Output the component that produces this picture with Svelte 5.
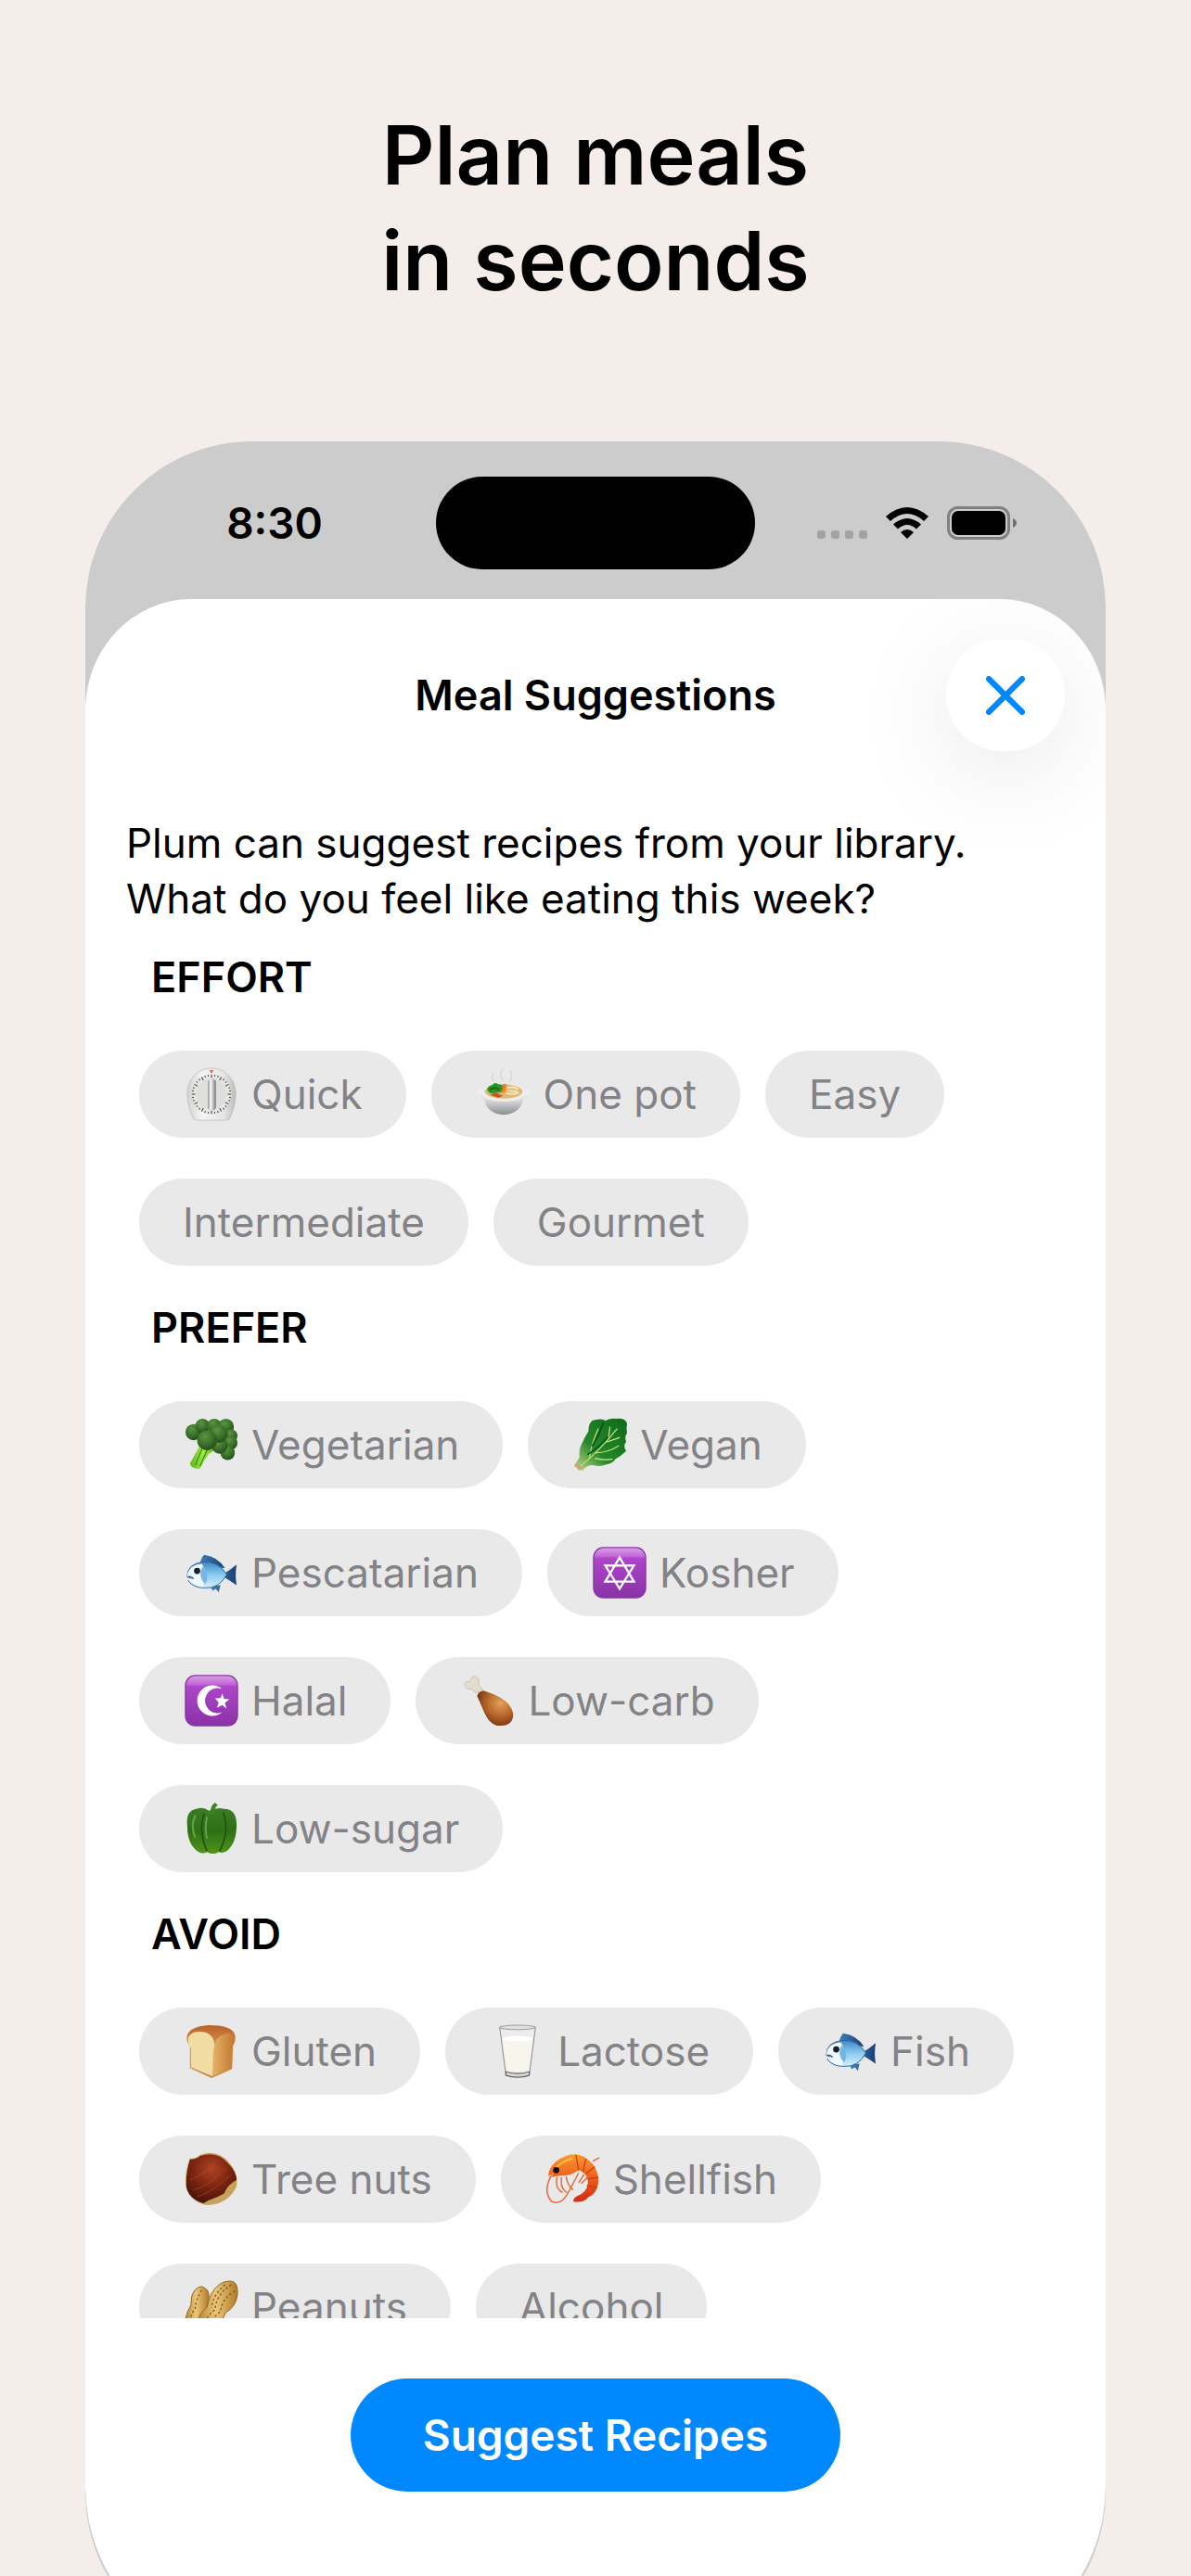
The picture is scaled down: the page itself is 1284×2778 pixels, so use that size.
<script>
  const groups = [
    { title: 'EFFORT', items: [['timer', 'Quick'], ['pot', 'One pot'], ['', 'Easy'], ['', 'Intermediate'], ['', 'Gourmet']] },
    { title: 'PREFER', items: [['broccoli', 'Vegetarian'], ['lettuce', 'Vegan'], ['fish', 'Pescatarian'], ['star', 'Kosher'], ['crescent', 'Halal'], ['drumstick', 'Low-carb'], ['pepper', 'Low-sugar']] },
    { title: 'AVOID', items: [['bread', 'Gluten'], ['milk', 'Lactose'], ['fish', 'Fish'], ['chestnut', 'Tree nuts'], ['shrimp', 'Shellfish'], ['peanuts', 'Peanuts'], ['', 'Alcohol']] },
  ];
  const ticks = Array.from({ length: 36 }, (_, i) => i * 10);
</script>

<svg class="defs" aria-hidden="true">
  <defs>
    <linearGradient id="steel" x1="0" x2="1"><stop offset="0" stop-color="#d2d2d0" /><stop offset=".3" stop-color="#f4f4f2" /><stop offset=".75" stop-color="#e6e6e4" /><stop offset="1" stop-color="#bcbcba" /></linearGradient>
    <linearGradient id="knob" x1="0" x2="1"><stop offset="0" stop-color="#8c8c8c" /><stop offset=".35" stop-color="#fff" /><stop offset=".6" stop-color="#c4c4c4" /><stop offset="1" stop-color="#777" /></linearGradient>
    <linearGradient id="bowl" x1="0" x2="0" y1="0" y2="1"><stop offset="0" stop-color="#fff" /><stop offset=".5" stop-color="#d5d7d8" /><stop offset="1" stop-color="#8b8e90" /></linearGradient>
    <radialGradient id="floret" cx=".4" cy=".3" r=".75"><stop offset="0" stop-color="#5c9443" /><stop offset=".6" stop-color="#376d28" /><stop offset="1" stop-color="#1f4a18" /></radialGradient>
    <linearGradient id="stalk" x1="0" x2="1"><stop offset="0" stop-color="#5cb81a" /><stop offset=".5" stop-color="#a4e84c" /><stop offset="1" stop-color="#4e9c18" /></linearGradient>
    <linearGradient id="leaf" x1="1" x2="0" y1="0" y2="1"><stop offset="0" stop-color="#0e6a1c" /><stop offset=".6" stop-color="#258729" /><stop offset="1" stop-color="#c8e08c" /></linearGradient>
    <linearGradient id="scales" x1="0" x2="0" y1="0" y2="1"><stop offset="0" stop-color="#3c86c4" /><stop offset=".5" stop-color="#8ccbf2" /><stop offset="1" stop-color="#d9effb" /></linearGradient>
    <linearGradient id="fin" x1="0" x2="1"><stop offset="0" stop-color="#3f7fb8" /><stop offset="1" stop-color="#1b3f73" /></linearGradient>
    <linearGradient id="violet" x1="0" x2="0" y1="0" y2="1"><stop offset="0" stop-color="#dca0e8" /><stop offset=".17" stop-color="#c268d8" /><stop offset=".22" stop-color="#ad45cb" /><stop offset="1" stop-color="#8a32a6" /></linearGradient>
    <radialGradient id="meat" cx=".65" cy=".35" r=".75"><stop offset="0" stop-color="#e2a05a" /><stop offset=".5" stop-color="#b8662a" /><stop offset="1" stop-color="#6a2a10" /></radialGradient>
    <linearGradient id="pepper" x1="0" x2="0" y1="0" y2="1"><stop offset="0" stop-color="#3b7d24" /><stop offset=".5" stop-color="#2f7016" /><stop offset="1" stop-color="#4f9418" /></linearGradient>
    <linearGradient id="crust" x1="0" x2="0" y1="0" y2="1"><stop offset="0" stop-color="#b9622a" /><stop offset=".3" stop-color="#cf8440" /><stop offset="1" stop-color="#c98a40" /></linearGradient>
    <linearGradient id="crustSide" x1="0" x2="1"><stop offset="0" stop-color="#e2b468" /><stop offset="1" stop-color="#c5772f" /></linearGradient>
    <radialGradient id="nut" cx=".5" cy=".3" r=".75"><stop offset="0" stop-color="#ae4220" /><stop offset=".5" stop-color="#7c2410" /><stop offset="1" stop-color="#3f100c" /></radialGradient>
    <linearGradient id="shell" x1="0" x2="0" y1="0" y2="1"><stop offset="0" stop-color="#fb9a2c" /><stop offset=".5" stop-color="#ef5c1c" /><stop offset="1" stop-color="#d02c14" /></linearGradient>
    <linearGradient id="peanut" x1="0" x2="1"><stop offset="0" stop-color="#b98432" /><stop offset=".45" stop-color="#ebc67a" /><stop offset="1" stop-color="#b07a26" /></linearGradient>
  </defs>
</svg>

{#snippet icon(name)}
  <svg class="emoji" viewBox="0 0 60 60" aria-hidden="true">
    {#if name === 'timer'}
      <path d="M30 1C15 1 3 13 3 29c0 11 3 20 6 27q1 3 4 3h34q3 0 4-3c3-7 6-16 6-27C57 13 45 1 30 1Z" fill="url(#steel)" stroke="#bbb" stroke-width=".8" />
      <circle cx="30" cy="30" r="22" fill="#e7e7e5" />
      {#each ticks as t}
        <line x1="30" x2="30" y1="8" y2={t % 30 ? 10 : 12} stroke="#444" stroke-width="1.1" transform="rotate({t} 30 30)" />
      {/each}
      <circle cx="30" cy="30" r="17" fill="#dededc" />
      <rect x="26" y="13" width="9" height="35" rx="4" fill="url(#knob)" />
      <path d="m30 7-2.5-4h5Z" fill="#d66" />
    {:else if name === 'pot'}
      <path d="M19 16q-4-5 0-10M29 14q-5-6 0-12M37 15q4-6 0-11" fill="none" stroke="#d6d6d6" stroke-width="1.4" />
      <path d="M1 27q0 6 7 8 3 17 22 18 19-1 22-18 7-2 7-8-4-5-29-5T1 27Z" fill="url(#bowl)" />
      <ellipse cx="30" cy="28" rx="26" ry="10" fill="#eceeee" />
      <ellipse cx="30" cy="27" rx="21" ry="8" fill="#dfb878" />
      <path d="M34 23q8-2 12 2M33 29q8 2 14-1M35 26l10 1" fill="none" stroke="#f6e6b6" stroke-width="2" />
      <path d="m26 20 7-2-1 9-6 2Z" fill="#ef7a25" /><path d="m15 31 6-3 8 4-5 2Z" fill="#c4571e" />
      <path d="M12 26q-1-5 5-6 3-4 7-1 5 0 5 4-1 6-8 5-6 3-9-2Z" fill="#299325" /><path d="M15 25q5-4 10 0" fill="none" stroke="#0d6518" stroke-width="1.500" />
    {:else if name === 'broccoli'}
      <path d="M17 31 6 51q1 6 11 6l10-17 10-6-6-6Z" fill="url(#stalk)" />
      <path d="m20 33-8 20M26 34l-9 20" stroke="#3e9410" stroke-width="1.400" />
      <g fill="url(#floret)"><circle cx="10" cy="16" r="9" /><circle cx="20" cy="9" r="8" /><circle cx="33" cy="9" r="8" /><circle cx="46" cy="10" r="9" /><circle cx="52" cy="20" r="7" /><circle cx="51" cy="28" r="8" /><circle cx="48" cy="39" r="8" /><circle cx="39" cy="31" r="9" /><circle cx="38" cy="18" r="10" /><circle cx="25" cy="25" r="11" /></g>
    {:else if name === 'lettuce'}
      <path d="M1 54q3-6 6-10-1-8 2-14 3-7 8-15 0-13 9-13 5-1 10 1 6-3 12-2 11-1 12 6-1 4 0 10-3 4-1 10-4 4 0 10-6 6-12 9-3 5-10 6-7 3-14 1-7-1-13 6Z" fill="url(#leaf)" />
      <path d="M8 54Q30 36 49 12M18 45q2-15 10-33M25 39q14 0 26-8M24 45q10 3 20 1M39 24l2-14M37 27l15-5" fill="none" stroke="#b6da7e" stroke-width="1.400" />
      <path d="M34 5q-5 14-13 27M39 21Q30 32 16 41" fill="none" stroke="#0b5318" stroke-width="1.800" />
      <path d="m1 53 3-3 6 6-3 3Z" fill="#c8a878" />
    {:else if name === 'fish'}
      <path d="M17 20q2-8 5-10 15 2 23 15Z" fill="url(#fin)" />
      <path d="m29 45 2 5 4-2 3 4 2-8ZM44 31q7-4 14-10-2 12 0 23-6-4-14-9Z" fill="url(#fin)" />
      <path d="M3 34q0-14 18-16 17-1 26 14-8 16-25 15-12 0-18-8l4-2Z" fill="url(#scales)" stroke="#2b659d" stroke-width="1" />
      <path d="M3 34q1-12 16-14 9 13 1 26-10-1-16-8l5-2Z" fill="#eef8fd" />
      <path d="M20 23q9 9 3 20-9-9-3-20" fill="#73b7e3" />
      <circle cx="14" cy="28" r="3.500" fill="#15202b" />
      <path d="M3 35q4-2 7 2" fill="none" stroke="#2b659d" stroke-width="1.500" />
    {:else if name === 'star' || name === 'crescent'}
      <rect x="1" y="2" width="58" height="56" rx="11" fill="url(#violet)" stroke="#8a38a2" stroke-width="1.400" />
      {#if name === 'star'}
        <path d="m30 13 16 27H14ZM30 48 14 22h32Z" fill="none" stroke="#fff" stroke-width="2.400" />
      {:else}
        <path d="M42 17a17 17 0 1 0 0 26 14 14 0 1 1 0-26Z" fill="#fff" />
        <path d="m42 22 2 6 6 .5-5 4 2 6.500-5-4-6 3 2-6-4-4.500 6-.3Z" fill="#fff" />
      {/if}
    {:else if name === 'drumstick'}
      <path d="m16 21-4-4q-7 1-8-4 0-5 6-4 1-7 6-6 6 2 3 9l7 8Z" fill="#e4dccf" stroke="#c3b7a6" stroke-width=".8" />
      <path d="M18 25q1-5 7-6c12 4 30 10 33 25 1 9-4 14-14 14-15 0-18-17-26-33Z" fill="url(#meat)" />
    {:else if name === 'pepper'}
      <path d="M13 8q8-3 14 2 10-4 17-2 14 0 14 18 0 20-11 29-5 3-9 1-6 4-13 0-5 3-11-1Q3 47 3 27 1 10 13 8Z" fill="url(#pepper)" />
      <path d="M22 13q-7 20 3 42M43 12q8 20-4 43" fill="none" stroke="#1c5410" stroke-width="1.800" />
      <path d="M12 15q-6 12 0 25M25 17q-3 14 0 24" fill="none" stroke="#8bbf6c" stroke-width="2" opacity=".6" />
      <path d="M23 11q5 2 6 0 0-7 5-10l3 3q-4 3-4 8 3 1 6-1-7 6-16 0Z" fill="#3c8426" />
    {:else if name === 'bread'}
      <path d="M3 12Q7 2 27 1q25 0 29 10 2 7-2 13l-1 26-23 10L6 49V24q-5-5-3-12Z" fill="url(#crust)" />
      <path d="M34 20q4-9 14-10 9 2 7 10-1 4-3 6v23L31 58V30Z" fill="url(#crustSide)" />
      <path d="M4 15q3-7 13-7 14 1 16 12 1 5-1 9l-1 29L7 48V27q-4-6-3-12Z" fill="#f1dca4" />
    {:else if name === 'milk'}
      <path d="m10 3 7 54q13 4 26 0l7-54Z" fill="#ececec" stroke="#888" stroke-width="1" />
      <path d="m13 16 5 35q12 3 24 0l5-35Z" fill="#f8f5ec" />
      <ellipse cx="30" cy="16" rx="17" ry="3" fill="#fff" /><ellipse cx="30" cy="3.500" rx="20" ry="2.500" fill="#e0e0e0" stroke="#999" />
      <path d="M17 53q13 4 26 0v4q-13 4-26 0Z" fill="#d8d8d8" stroke="#666" stroke-width="1.200" />
    {:else if name === 'chestnut'}
      <path d="M6 7q6 0 11-4 20-7 33 9 10 12 8 26-9 20-33 21Q7 56 2 40-1 24 6 7Z" fill="#c6a25a" />
      <path d="M6 8q7 0 12-4 19-6 31 9 9 9 9 18-9 4-14 15-7 4-13 6-6 2-10 5Q5 52 2 39 1 24 6 8Z" fill="url(#nut)" />
      <path d="M9 42q19-3 36-25M14 50q20-7 36-24M6 31Q23 25 36 9" fill="none" stroke="#c45a34" stroke-width="1" opacity=".45" />
    {:else if name === 'shrimp'}
      <path d="M5 27Q-4 44 6 55q11 5 19-11l11-21M12 28q-3 12 6 17M17 28q-2 12 6 17M22 27q2 11 8 15M42 25l-6 9M46 28l-7 7" fill="none" stroke="#e9653a" stroke-width="1.500" />
      <path d="M2 26q1-11 12-18Q31-3 45 7q14 10 13 27-1 12-11 16-5 7-17 5 0-5 6-7 8-3 10-11 2-13-10-17-9 7-21 6-6 1-13 2l7-4Z" fill="url(#shell)" />
      <path d="m33 3 3 17M44 7l-3 15M54 16l-10 8M58 28l-12 2M56 39l-11-2" stroke="#be3c14" stroke-width="1.200" />
      <path d="M8 20q9-10 21-13" fill="none" stroke="#ffc254" stroke-width="2" />
      <circle cx="11" cy="20" r="3.500" fill="#161010" /><path d="m52 10 7-4" stroke="#e9653a" stroke-width="1.500" />
    {:else if name === 'peanuts'}
      <path d="M8 18q3-10 11-11 9 3 8 12-3 9-2 18-2 16-13 20Q1 56 1 43q2-9 6-15Z" fill="url(#peanut)" stroke="#93651f" />
      <path d="M30 15Q38 1 50 1q10-1 9 15-2 14-13 20-5 8-6 16-5 9-17 8-9-3-8-14 1-9 10-16 2-9 5-15Z" fill="url(#peanut)" stroke="#93651f" />
      <path d="M52 5Q35 16 34 33 22 41 21 56M56 12Q42 20 40 35 29 43 27 57M45 5Q32 16 30 31M19 11q-7 12-7 20-6 8-7 20" fill="none" stroke="#8a5c1c" stroke-width="1.500" stroke-dasharray="2.500 2.500" />
    {/if}
  </svg>
{/snippet}

<main class="page">
  <h1>Plan meals<br />in seconds</h1>

  <section class="phone">
    <div class="status">
      <time class="clock">8:30</time>
      <div class="island"></div>
      <div class="indicators">
        <svg class="dots" viewBox="0 0 54 34" aria-hidden="true">
          {#each [0, 15, 30, 45] as x}<rect {x} y="25" width="9" height="9" rx="3" fill="#a3a3a3" />{/each}
        </svg>
        <svg class="wifi" viewBox="0 0 46 34" aria-hidden="true">
          <path d="M0 10Q23-10 46 10l-5 5Q23-1 5 15ZM8 18.500q15-13 30 0l-5 5q-10-9-20 0ZM16 27q7-6 14 0l-7 7Z" />
        </svg>
        <svg class="battery" viewBox="0 0 75 36" aria-hidden="true">
          <rect x="1.500" y="1.500" width="65" height="33" rx="10" fill="none" stroke="#808080" stroke-width="3" />
          <rect x="5" y="5" width="58" height="26" rx="7" />
          <path d="M71 13q4 2 4 5t-4 5Z" fill="#707070" />
        </svg>
      </div>
    </div>

    <div class="sheet">
      <header>
        <h2>Meal Suggestions</h2>
        <button class="close" type="button" aria-label="Close">
          <svg viewBox="0 0 40 40" aria-hidden="true"><path d="m3 3 34 34M37 3 3 37" /></svg>
        </button>
      </header>

      <div class="scroll">
        <p>Plum can suggest recipes from your library. What do you feel like eating this week?</p>
        <div class="groups">
          {#each groups as group}
            <section>
              <h3>{group.title}</h3>
              <div class="chips">
                {#each group.items as [name, label]}
                  <button class="chip" type="button">{#if name}{@render icon(name)}{/if}{label}</button>
                {/each}
              </div>
            </section>
          {/each}
        </div>
      </div>

      <footer><button class="cta" type="button">Suggest Recipes</button></footer>
    </div>
  </section>
</main>

<style>
  :global(body) { background: #f5edea; }
  .defs { position: absolute; width: 0; height: 0; }
  .page {
    height: 100vh;
    box-sizing: border-box;
    padding: 110px 92px 0;
    display: flex;
    flex-direction: column;
    overflow: hidden;
    background: #f5edea;
    color: #000;
    font-family: Inter, "Liberation Sans", sans-serif;
    font-size: 44px;
    line-height: 60px;
  }
  h1, h2, h3, p { margin: 0; }
  h1 {
    margin-bottom: 138px;
    text-align: center;
    font-size: 88px;
    line-height: 114px;
    font-weight: 600;
  }
  button { border: 0; font: inherit; cursor: pointer; }
  .phone {
    flex: 1;
    min-height: 0;
    margin-bottom: -90px;
    display: flex;
    flex-direction: column;
    overflow: hidden;
    border-radius: 180px;
    background: #ccc;
  }
  .status {
    flex: none;
    height: 170px;
    box-sizing: border-box;
    padding-top: 6px;
    display: grid;
    grid-template-columns: 1fr 344px 1fr;
    align-items: center;
    justify-items: center;
  }
  .clock { padding-left: 30px; font-size: 46px; font-weight: 600; }
  .island { width: 344px; height: 100px; border-radius: 50px; background: #000; }
  .indicators { display: flex; align-items: center; gap: 20px; padding-right: 30px; }
  .dots { width: 54px; height: 34px; }
  .wifi { width: 46px; height: 34px; }
  .battery { width: 75px; height: 36px; }
  .sheet {
    flex: 1;
    min-height: 0;
    display: flex;
    flex-direction: column;
    overflow: hidden;
    border-radius: 114px 114px 180px 180px / 120px 120px 188px 188px;
    background: #fff;
  }
  header {
    flex: none;
    padding: 43px 44px 0;
    display: grid;
    grid-template-columns: 1fr auto 1fr;
    align-items: center;
  }
  h2, h3 { font-size: 45px; font-weight: 600; }
  h2 { grid-column: 2; }
  .close {
    justify-self: end;
    width: 128px;
    height: 121px;
    padding: 0;
    display: grid;
    place-items: center;
    border-radius: 60px;
    background: #fff;
    box-shadow: 0 22px 110px rgb(0 0 0 / 10%);
  }
  .close svg { width: 42px; height: 42px; fill: none; stroke: #08f; stroke-width: 6; stroke-linecap: round; }
  .scroll { flex: 1; min-height: 0; overflow: hidden; padding: 69px 44px 0; }
  p { margin-bottom: 25px; max-width: 940px; }
  .groups { display: grid; gap: 37px; }
  h3 { margin: 0 27px 49px; }
  .chips { display: flex; flex-wrap: wrap; gap: 44px 27px; padding: 0 14px; }
  .chip {
    height: 94px;
    padding: 0 47px;
    display: flex;
    align-items: center;
    gap: 14px;
    border-radius: 47px;
    background: #e9e9e9;
    color: #838387;
    white-space: nowrap;
  }
  .emoji { width: 58px; height: 58px; margin-left: 2px; }
  footer { flex: none; height: 368px; box-sizing: border-box; padding-top: 65px; text-align: center; }
  .cta {
    height: 122px;
    padding: 0 78px;
    border-radius: 61px;
    background: #08f;
    color: #fff;
    font-size: 46px;
    font-weight: 600;
  }
</style>
